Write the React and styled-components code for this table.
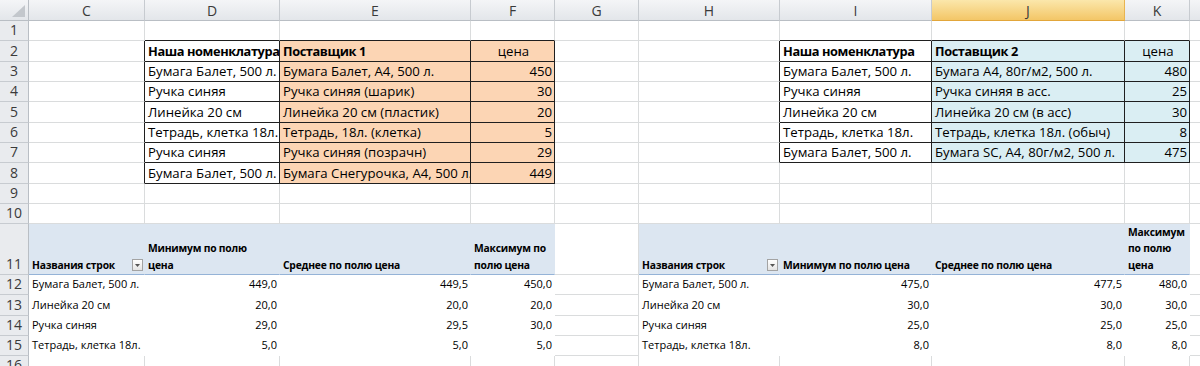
import styled, { createGlobalStyle } from 'styled-components';

const GRID = '#DADCDD';
const BORDER = '#1f1f1f';
const PEACH = '#FCD5B4';
const AQUA = '#DAEEF3';
const PIVOT_HEAD = '#DCE6F1';
const PIVOT_LINE = '#95B3D7';

const GlobalStyle = createGlobalStyle`
  html, body {
    margin: 0;
    padding: 0;
    background: #fff;
    overflow: hidden;
  }
  body {
    font-family: 'Open Sans', 'Liberation Sans', sans-serif;
  }
`;

const COLUMNS = [
  { name: '', width: 29 },
  { name: 'C', width: 116 },
  { name: 'D', width: 135 },
  { name: 'E', width: 191 },
  { name: 'F', width: 84 },
  { name: 'G', width: 84 },
  { name: 'H', width: 141 },
  { name: 'I', width: 152 },
  { name: 'J', width: 193, selected: true },
  { name: 'K', width: 65 },
  { name: 'L', width: 40 },
];

const ROW_HEIGHTS = [20, 21, 20, 20, 21, 20, 20, 21, 20, 20, 51, 20, 21, 20, 20, 20];

// содержимое ячеек
const CELLS = {
  D2: { v: 'Наша номенклатура', bold: true },
  E2: { v: 'Поставщик 1', bold: true },
  F2: { v: 'цена', align: 'center' },
  D3: { v: 'Бумага Балет, 500 л.' },
  E3: { v: 'Бумага Балет, А4, 500 л.' },
  F3: { v: '450', align: 'right' },
  D4: { v: 'Ручка синяя' },
  E4: { v: 'Ручка синяя (шарик)' },
  F4: { v: '30', align: 'right' },
  D5: { v: 'Линейка 20 см' },
  E5: { v: 'Линейка 20 см (пластик)' },
  F5: { v: '20', align: 'right' },
  D6: { v: 'Тетрадь, клетка 18л.' },
  E6: { v: 'Тетрадь, 18л. (клетка)' },
  F6: { v: '5', align: 'right' },
  D7: { v: 'Ручка синяя' },
  E7: { v: 'Ручка синяя (позрачн)' },
  F7: { v: '29', align: 'right' },
  D8: { v: 'Бумага Балет, 500 л.' },
  E8: { v: 'Бумага Снегурочка, А4, 500 л.' },
  F8: { v: '449', align: 'right' },

  I2: { v: 'Наша номенклатура', bold: true },
  J2: { v: 'Поставщик 2', bold: true },
  K2: { v: 'цена', align: 'center' },
  I3: { v: 'Бумага Балет, 500 л.' },
  J3: { v: 'Бумага А4, 80г/м2, 500 л.' },
  K3: { v: '480', align: 'right' },
  I4: { v: 'Ручка синяя' },
  J4: { v: 'Ручка синяя в асс.' },
  K4: { v: '25', align: 'right' },
  I5: { v: 'Линейка 20 см' },
  J5: { v: 'Линейка 20 см (в асс)' },
  K5: { v: '30', align: 'right' },
  I6: { v: 'Тетрадь, клетка 18л.' },
  J6: { v: 'Тетрадь, клетка 18л. (обыч)' },
  K6: { v: '8', align: 'right' },
  I7: { v: 'Бумага Балет, 500 л.' },
  J7: { v: 'Бумага SC, А4, 80г/м2, 500 л.' },
  K7: { v: '475', align: 'right' },

  C11: { v: 'Названия строк', bold: true, filter: true },
  D11: { v: 'Минимум по полю\nцена', bold: true },
  E11: { v: 'Среднее по полю цена', bold: true },
  F11: { v: 'Максимум по\nполю цена', bold: true },
  H11: { v: 'Названия строк', bold: true, filter: true },
  I11: { v: 'Минимум по полю цена', bold: true },
  J11: { v: 'Среднее по полю цена', bold: true },
  K11: { v: 'Максимум\nпо полю\nцена', bold: true },
};

const PIVOT_LEFT = [
  ['Бумага Балет, 500 л.', '449,0', '449,5', '450,0'],
  ['Линейка 20 см', '20,0', '20,0', '20,0'],
  ['Ручка синяя', '29,0', '29,5', '30,0'],
  ['Тетрадь, клетка 18л.', '5,0', '5,0', '5,0'],
];

const PIVOT_RIGHT = [
  ['Бумага Балет, 500 л.', '475,0', '477,5', '480,0'],
  ['Линейка 20 см', '30,0', '30,0', '30,0'],
  ['Ручка синяя', '25,0', '25,0', '25,0'],
  ['Тетрадь, клетка 18л.', '8,0', '8,0', '8,0'],
];

PIVOT_LEFT.forEach((row, i) => {
  ['C', 'D', 'E', 'F'].forEach((col, j) => {
    CELLS[`${col}${12 + i}`] = { v: row[j], align: j ? 'right' : 'left' };
  });
});
PIVOT_RIGHT.forEach((row, i) => {
  ['H', 'I', 'J', 'K'].forEach((col, j) => {
    CELLS[`${col}${12 + i}`] = { v: row[j], align: j ? 'right' : 'left' };
  });
});

const TABLES = [
  { from: 2, to: 4, rows: [2, 8], fills: [null, PEACH, PEACH] },
  { from: 7, to: 9, rows: [2, 7], fills: [null, AQUA, AQUA] },
];

const PIVOTS = [
  { from: 1, to: 4 },
  { from: 6, to: 9 },
];

function inRange(n, a, b) {
  return n >= a && n <= b;
}

function cellLook(c, r) {
  const look = { fill: '#fff', right: GRID, bottom: GRID };

  TABLES.forEach((t) => {
    const [r1, r2] = t.rows;
    if (inRange(c, t.from, t.to) && inRange(r, r1, r2)) {
      look.right = BORDER;
      look.bottom = BORDER;
      look.fill = t.fills[c - t.from] || '#fff';
    }
    if (c === t.from - 1 && inRange(r, r1, r2)) look.right = BORDER;
    if (r === r1 - 1 && inRange(c, t.from, t.to)) look.bottom = BORDER;
  });

  PIVOTS.forEach((p) => {
    if (!inRange(c, p.from, p.to)) return;
    if (r === 11) {
      look.fill = PIVOT_HEAD;
      look.right = PIVOT_HEAD;
      look.bottom = PIVOT_LINE;
      look.pivotHead = true;
    } else if (inRange(r, 12, 15)) {
      look.right = '#fff';
      look.bottom = '#fff';
      look.small = true;
    }
  });

  return look;
}

const Page = styled.div`
  width: 1200px;
  height: 366px;
  overflow: hidden;
`;

const Sheet = styled.div`
  display: grid;
  grid-template-columns: ${COLUMNS.map((c) => `${c.width}px`).join(' ')};
  grid-template-rows: 21px ${ROW_HEIGHTS.map((h) => `${h}px`).join(' ')};
  color: #000;
`;

const Corner = styled.div`
  box-sizing: border-box;
  background: linear-gradient(#f4f5f7, #e3e6ea);
  border-right: 1px solid #b9bec4;
  border-bottom: 1px solid #b9bec4;
  display: flex;
  align-items: flex-end;
  justify-content: flex-end;
  padding: 0 3px 3px 0;

  svg {
    display: block;
  }
`;

const ColumnHeader = styled.div`
  box-sizing: border-box;
  background: ${(p) => (p.$selected
    ? 'linear-gradient(#fbe7ab, #f3c667)'
    : 'linear-gradient(#f4f5f7, #e3e6ea)')};
  border-right: 1px solid ${(p) => (p.$selected ? '#e8b450' : '#c7cbd0')};
  border-bottom: 1px solid ${(p) => (p.$selected ? '#e2a63a' : '#b9bec4')};
  display: flex;
  align-items: center;
  justify-content: center;
  font-size: 14px;
  color: #3a3a3a;
`;

const RowHeader = styled.div`
  box-sizing: border-box;
  background: #e9ebee;
  border-right: 1px solid #b9bec4;
  border-bottom: 1px solid #c7cbd0;
  display: flex;
  align-items: flex-end;
  justify-content: center;
  padding-bottom: 1px;
  font-size: 14px;
  line-height: 18px;
  color: #3a3a3a;
`;

function cellFont(p) {
  if (p.$head) return 'font-size: 10.3px; letter-spacing: -0.2px; line-height: 16.5px;';
  if (p.$small) return 'font-size: 11px; line-height: 18px;';
  if (p.$bold) return 'font-size: 12.8px; letter-spacing: -0.4px; line-height: 18px;';
  return 'font-size: 13.2px; line-height: 18px;';
}

const Cell = styled.div`
  box-sizing: border-box;
  min-width: 0;
  background: ${(p) => p.$fill};
  border-right: 1px solid ${(p) => p.$right};
  border-bottom: 1px solid ${(p) => p.$bottom};
  display: flex;
  align-items: flex-end;
  justify-content: ${(p) => ({ right: 'flex-end', center: 'center' }[p.$align] || 'space-between')};
  padding: ${(p) => (p.$align === 'right' ? '0 2px 1px 3px' : '0 1px 1px 3px')};
  overflow: hidden;
  white-space: ${(p) => (p.$head ? 'pre-line' : 'nowrap')};
  font-weight: ${(p) => (p.$bold ? 700 : 400)};
  ${cellFont}
`;

const FilterButton = styled.span`
  flex: none;
  box-sizing: border-box;
  width: 11px;
  height: 12px;
  margin: 0 0 2px 4px;
  border: 1px solid #a3a3a3;
  background: linear-gradient(#ffffff, #e4e4e4);
  display: flex;
  align-items: center;
  justify-content: center;

  svg {
    display: block;
  }
`;

function Filter() {
  return (
    <FilterButton>
      <svg width="5" height="3" viewBox="0 0 5 3">
        <polygon points="0,0 5,0 2.5,3" fill="#555" />
      </svg>
    </FilterButton>
  );
}

export default function App() {
  return (
    <Page>
      <GlobalStyle />
      <Sheet>
        <Corner>
          <svg width="13" height="12" viewBox="0 0 13 12">
            <polygon points="13,0 13,12 0,12" fill="#c3c7cc" />
          </svg>
        </Corner>
        {COLUMNS.slice(1).map((col) => (
          <ColumnHeader key={col.name} $selected={col.selected}>
            {col.name === 'L' ? '' : col.name}
          </ColumnHeader>
        ))}
        {ROW_HEIGHTS.map((h, ri) => {
          const r = ri + 1;
          return [
            <RowHeader key={`h${r}`}>{r}</RowHeader>,
            ...COLUMNS.slice(1).map((col, ci) => {
              const c = ci + 1;
              const look = cellLook(c, r);
              const data = CELLS[`${col.name}${r}`] || {};
              return (
                <Cell
                  key={`${col.name}${r}`}
                  $fill={look.fill}
                  $right={look.right}
                  $bottom={look.bottom}
                  $small={look.small}
                  $head={look.pivotHead}
                  $bold={data.bold}
                  $align={data.align}
                >
                  <span>{data.v}</span>
                  {data.filter ? <Filter /> : null}
                </Cell>
              );
            }),
          ];
        })}
      </Sheet>
    </Page>
  );
}
